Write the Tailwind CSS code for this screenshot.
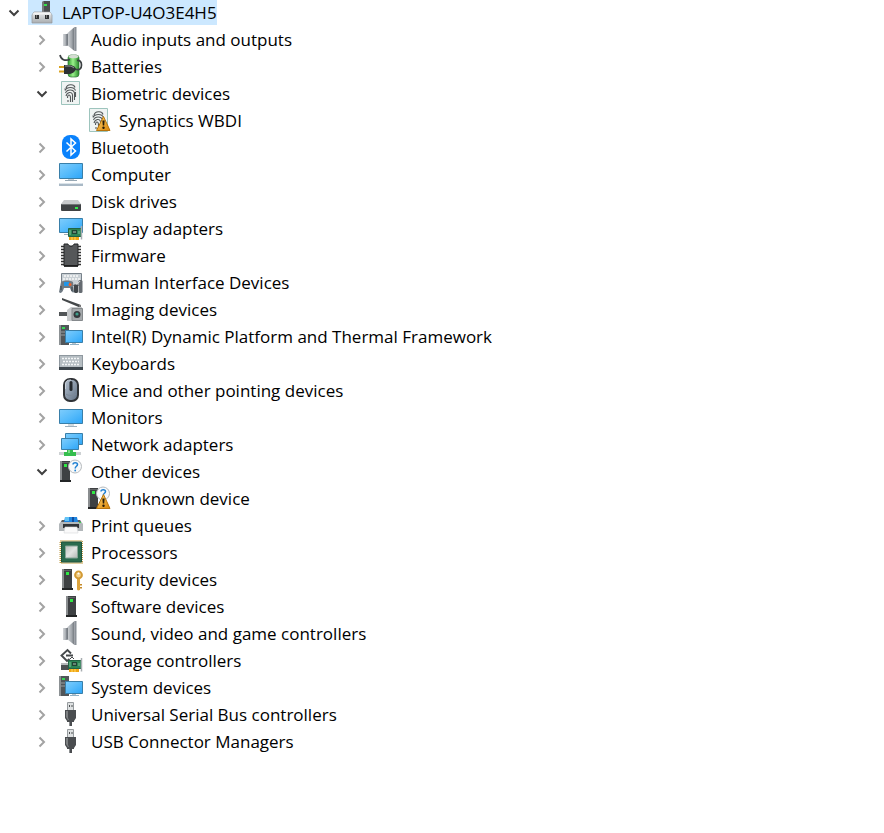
<!DOCTYPE html>
<html lang="en">
<head>
    <meta charset="UTF-8">
    <meta name="viewport" content="width=device-width, initial-scale=1.0">
    <script src="https://cdn.jsdelivr.net/npm/@tailwindcss/browser@4"></script>
    <title>Device Manager</title>
</head>
<body class="bg-white text-black font-['Open_Sans','Noto_Sans',sans-serif] text-[17px] leading-[26px]">

  <!-- icons -->
  <svg class="absolute size-0" aria-hidden="true">
    <defs>
      <linearGradient id="screen" x1="0" y1="0" x2="1" y2="1"><stop offset="0" stop-color="#7fcdfc"/><stop offset=".5" stop-color="#56bbfb"/><stop offset="1" stop-color="#2da5f8"/></linearGradient>
      <linearGradient id="steel" x1="0" y1="0" x2="1" y2="0"><stop offset="0" stop-color="#d3d6d9"/><stop offset=".6" stop-color="#a4a9ae"/><stop offset="1" stop-color="#6c7278"/></linearGradient>
      <linearGradient id="silver" x1="0" y1="0" x2="0" y2="1"><stop offset="0" stop-color="#e9ebec"/><stop offset="1" stop-color="#a9adb0"/></linearGradient>
      <linearGradient id="battery" x1="0" y1="0" x2="1" y2="0"><stop offset="0" stop-color="#2f9e2e"/><stop offset=".45" stop-color="#9bf08c"/><stop offset="1" stop-color="#248a27"/></linearGradient>
      <linearGradient id="gold" x1="0" y1="0" x2="1" y2="1"><stop offset="0" stop-color="#ffd36a"/><stop offset="1" stop-color="#d98509"/></linearGradient>
      <linearGradient id="mouse" x1="0" y1="0" x2="1" y2="1"><stop offset="0" stop-color="#b8c4d2"/><stop offset="1" stop-color="#5f6f82"/></linearGradient>
      <linearGradient id="metal" x1="0" y1="0" x2="1" y2="1"><stop offset="0" stop-color="#bcc0bd"/><stop offset=".5" stop-color="#e2e4e2"/><stop offset="1" stop-color="#b3b7b4"/></linearGradient>
    </defs>

    <symbol id="right" viewBox="0 0 12 12"><path d="M3.500 1.500 8 6l-4.500 4.500" fill="none" stroke="#a3a3a3" stroke-width="2"/></symbol>
    <symbol id="down" viewBox="0 0 12 12"><path d="M1.500 3.500 6 8l4.500-4.500" fill="none" stroke="#404040" stroke-width="2"/></symbol>

    <symbol id="laptop" viewBox="0 0 24 24">
      <path d="M12 2l2-1h6v13h-8z" fill="#4b4e50"/><path d="M12 2l2-1v12h-2z" fill="#77797b"/><path d="M14 4h3v2h-3z" fill="#35e04c"/>
      <path d="M4 12h16l2 3v8H2v-8z" fill="url(#silver)" stroke="#92979a" stroke-width=".7"/><path d="M4 12.500h16l1.500 2h-19z" fill="#f3f4f4"/>
      <path d="M5 15h4v4H5zM15 15h4v4h-4z" fill="#303234"/><path d="M6 15h1v3H6zM16 15h1v3h-1z" fill="#777"/>
    </symbol>
    <symbol id="speaker" viewBox="0 0 24 24">
      <path d="M4 7h5v12H4z" fill="url(#steel)"/><path d="M8 6.500 15.500 0v24L8 18z" fill="url(#steel)"/>
      <path d="M7.500 7h1.500v11H7.500z" fill="#777d83"/><path d="M15.500 0H18v24h-2.500z" fill="#8b9198"/><path d="M17 0h1v24h-1z" fill="#c3c7ca"/>
    </symbol>
    <symbol id="batteries" viewBox="0 0 24 24">
      <rect x="9" y="1" width="11" height="22" rx="3" fill="url(#battery)" stroke="#32753a" stroke-width=".7"/>
      <ellipse cx="14.500" cy="2.500" rx="5" ry="1.800" fill="#d5dcd2"/>
      <path d="M1 1c1 5 5 6 10 4.500M16 15c5 2 6.500-1 6.500-4S21 6 18 6.500" fill="none" stroke="#3b4042" stroke-width="1.700"/>
      <path d="M0 13h6M0 17.500h6" stroke="#d9a320" stroke-width="2"/>
      <path d="M5 11h5c4 0 6 2 7 4-1 3-4 5-8 5H5z" fill="#2e3234"/><path d="M6 12h4c2 0 4 1 5 2" stroke="#8f9698" fill="none"/>
    </symbol>
    <symbol id="print" viewBox="0 0 24 24">
      <path d="M2.500.500h18v23h-18z" fill="#f0f4f3" stroke="#9dc4bd"/>
      <g fill="none" stroke="#54585a" stroke-width="1.100">
        <path d="M7 7c1-4 8-4.500 9-.500M6 9.500c2-4 9-4 10.500 0M6.500 12C8 8 14.500 8 15.500 12v7M7 15c1-4 6-5 6.500-1v7M8.500 17c0-4 3-4 3 0v4M9 19v2M6 7.500v1M16.500 11v5"/>
      </g>
    </symbol>
    <symbol id="warning" viewBox="0 0 24 24">
      <path d="M16.500 8.500 23 22.500H9.500z" fill="url(#gold)" stroke="#b8750e" stroke-linejoin="round"/>
      <path d="M15.400 12.500h2.200l-.4 5h-1.400z" fill="#241a08"/><circle cx="16.500" cy="19.800" r="1.200" fill="#241a08"/>
    </symbol>
    <symbol id="bluetooth" viewBox="0 0 24 24">
      <rect x="3" width="18" height="24" rx="8" fill="#0a82fc"/>
      <path d="m7.500 7.500 9 8.500-4.500 4V4l4.500 4-9 8.500" fill="none" stroke="#fff" stroke-width="1.500"/>
    </symbol>
    <symbol id="computer" viewBox="0 0 24 24">
      <path d="M.5 1.500h23v15H.500z" fill="url(#screen)" stroke="#397fa9"/><path d="M9 17h6v2H9z" fill="#c1cbd2"/><path d="M6 18h12v1H6z" fill="#98a9b5"/>
      <path d="M1 21h22l1 1v2H0v-2z" fill="#a9b9c6"/><path d="M1 21h22v1H1z" fill="#dbe4ea"/>
    </symbol>
    <symbol id="disk" viewBox="0 0 24 24">
      <path d="M5 11h14l3 4v2H2v-2z" fill="#c8cacc"/><rect x="2" y="15" width="20" height="7" rx="1" fill="#3f4244"/><path d="M3 15h18v1H3z" fill="#707375"/><path d="M16 18h3v2h-3z" fill="#36e74b"/>
    </symbol>
    <symbol id="card" viewBox="0 0 24 24">
      <path d="M10 19h10v5H10z" fill="#f0a615"/><path d="M13 20v4M16 20v4" stroke="#ffda64"/>
      <path d="M9.500 12.500h13v8h-13z" fill="#2c8555" stroke="#216444"/><path d="M13 14h5v4h-5z" fill="#1e4534"/><path d="M14 15h3v2h-3z" fill="#668674"/><path d="M11 14v5M20 15v3" stroke="#7ec19b"/>
      <path d="M22.500 10v13.500" stroke="#a8aeb1" stroke-width="1.500"/>
    </symbol>
    <symbol id="display" viewBox="0 0 24 24">
      <path d="M.5 2.500h23v14H.500z" fill="url(#screen)" stroke="#397fa9"/><path d="M5 18h6v1H5z" fill="#a0aeb7"/>
      <use href="#card"/>
    </symbol>
    <symbol id="firmware" viewBox="0 0 24 24">
      <path d="M2 3.500h20M2 6.500h20M2 9.500h20M2 12.500h20M2 15.500h20M2 18.500h20M2 21.500h20" stroke="#333" stroke-width="1.600"/>
      <path d="M5 1h4c.5 3 5.500 3 6 0h4v22H5z" fill="#555759" stroke="#242628"/><path d="M5 23h14" stroke="#151515" stroke-width="1.500"/>
    </symbol>
    <symbol id="hid" viewBox="0 0 24 24">
      <path d="M2.500 3.500h20v12h-20z" fill="#c9d0d5" stroke="#78828b"/><path d="M5 6h15M4 9h17" stroke="#f8f8f8" stroke-width="1.500" stroke-dasharray="2 1"/>
      <path d="M2 12c3-2 9-2 12 0l1 10c-2 2-3-2-4-4H5c-1 3-3 7-5 4z" fill="#6f7a83"/><path d="M5 12h5v4H5z" fill="#2196e9"/><circle cx="11" cy="14.500" r="1.500" fill="#e9632c"/><path d="M2 16v4M13 17v4" stroke="#555f67" stroke-width="2"/>
      <rect x="15" y="14" width="4" height="9" rx="1.500" fill="#404549"/><rect x="19.500" y="10" width="4" height="13" rx="1.500" fill="#656b71"/><path d="M17 15c0-3 3-1 4-4" stroke="#ddd" fill="none"/>
    </symbol>
    <symbol id="camera" viewBox="0 0 24 24">
      <path d="m3 1 19 7v3L3 3z" fill="#44484a"/><path d="M20 8h2v6h-2z" fill="#777"/>
      <path d="M0 15h10v4H0z" fill="#515557"/><path d="M8 13l4-3h11v14H8z" fill="#c6c9cb"/><path d="M13 11.500h10.500v12H13z" fill="#a4a8ab" stroke="#85898c"/>
      <circle cx="18" cy="17.500" r="3.500" fill="#34383b"/><circle cx="18" cy="17" r="1.600" fill="#3f9e8b"/>
    </symbol>
    <symbol id="system" viewBox="0 0 24 24">
      <path d="M0 1h10v20H0z" fill="#515659"/><path d="M0 1h2v20H0z" fill="#8c9194"/><path d="M3 3h3v2H3z" fill="#38d756"/><path d="M2 8h5M2 11h5" stroke="#989da0"/>
      <path d="M6.500 6.500h17v12h-17z" fill="url(#screen)" stroke="#397fa9"/><path d="M13 19h4v1h-4z" fill="#b9c4cb"/><path d="M11 20h9v1h-9z" fill="#91b1c5"/>
    </symbol>
    <symbol id="keyboard" viewBox="0 0 24 24">
      <path d="M0 4h24v15H0z" fill="#8f989f"/><path d="M1 5h22v11H1z" fill="#b6bec3"/>
      <path d="M3 7.500h18M4 10.500h16M3 13.500h18" stroke="#f4f6f7" stroke-width="1.600" stroke-dasharray="2 1"/><path d="M0 16h24v3H0z" fill="#3d464d"/>
    </symbol>
    <symbol id="mice" viewBox="0 0 24 24">
      <rect x="5" y="1" width="14" height="22" rx="6" fill="url(#mouse)" stroke="#303337" stroke-width="2"/>
      <path d="M6.500 11V6c0-3 2-4 5.500-4" fill="none" stroke="#cbd3dc"/><rect x="10.500" y="3" width="3" height="10" rx="1.500" fill="#25292d"/><path d="M7 16c2 2 8 2 10 0" fill="none" stroke="#7d8a99"/>
    </symbol>
    <symbol id="monitor" viewBox="0 0 24 24">
      <path d="M.5 4.500h23v14H.500z" fill="url(#screen)" stroke="#397fa9"/><path d="M9 19h6v2H9z" fill="#d2dade"/><path d="M6 21h12v1H6z" fill="#9eb0bd"/>
    </symbol>
    <symbol id="network" viewBox="0 0 24 24">
      <path d="M6.500 1.500h17v11h-17z" fill="url(#screen)" stroke="#397fa9"/><path d="M2.500 6.500h17v11h-17z" fill="url(#screen)" stroke="#397fa9"/>
      <path d="M0 20h22v3H0z" fill="#cdd1d3"/><path d="M8 18h6v2h3v4H5v-4h3z" fill="#35be4e"/><path d="M9 18h2v3H9z" fill="#78dd82"/>
    </symbol>
    <symbol id="tower" viewBox="0 0 24 24">
      <path d="M8 2h9v20H8z" fill="#3e4143"/><path d="M7 2h2v20H7z" fill="#8a8d8f"/><path d="M11 5h3v3h-3z" fill="#2fe944"/><path d="M7 21h11v2H7z" fill="#232526"/><path d="M9 3h7v1H9z" fill="#606365"/>
    </symbol>
    <symbol id="unknown" viewBox="0 0 24 24">
      <use href="#tower" x="-6"/>
      <circle cx="16" cy="7.500" r="6.500" fill="#f7f9fa" stroke="#b6babd"/>
      <path d="M14 5.500c0-2.500 4.500-2.500 4.500 0 0 1.800-2.300 1.800-2.300 4" fill="none" stroke="#2182d3" stroke-width="1.500"/><circle cx="16.200" cy="11.500" r=".9" fill="#2182d3"/>
    </symbol>
    <symbol id="printer" viewBox="0 0 24 24">
      <path d="M3 7h18l3 4v7H0v-7z" fill="#b2b7ba"/><path d="M3 7h18l1 2H2z" fill="#5a6064"/><path d="M6 4h12l1 5H5z" fill="#2186df"/><path d="M6 4h4v4H6z" fill="#62c3f5"/><path d="M13 4h2v5h-2z" fill="#114fa0"/>
      <path d="M4 11h16v4H4z" fill="#303437"/><path d="M6 14h12l1 6H5z" fill="#fafafa" stroke="#d7d9da" stroke-width=".6"/><path d="M20 9h2v1h-2z" fill="#39de4c"/>
    </symbol>
    <symbol id="processor" viewBox="0 0 24 24">
      <rect x="1.500" y="1" width="22" height="22" fill="none" stroke="#c19b45" stroke-width="2" stroke-dasharray="1 1"/>
      <path d="M2.500 2h20v20h-20z" fill="#2a6b4e" stroke="#1f553d"/><path d="M6.500 6h12v12h-12z" fill="url(#metal)" stroke="#86a597"/>
    </symbol>
    <symbol id="security" viewBox="0 0 24 24">
      <use href="#tower" x="-4"/>
      <circle cx="19.500" cy="8" r="3.400" fill="#f5d18a" stroke="#d29a35" stroke-width="2"/><circle cx="19.500" cy="6.500" r="1" fill="#fff"/><path d="M18 12h3v11l-2 .5-1-1z" fill="#dca33d"/><path d="M21 17h2v1.500h-2zM21 20h2v1.500h-2z" fill="#c58a27"/>
    </symbol>
    <symbol id="storage" viewBox="0 0 24 24">
      <path d="M2 15h9l1 7H2z" fill="#4c5052"/><path d="M2 15h9v2H2z" fill="#b6b9bb"/>
      <path d="M12 5.500 8.500 2 2.500 7.500 8 13l2.500-2M7 7.500h7" fill="none" stroke="#45494b" stroke-width="1.900"/><path d="m11 11 2-2 2 2" stroke="#45494b" fill="none"/>
      <use href="#card"/>
    </symbol>
    <symbol id="usb" viewBox="0 0 24 24">
      <path d="M8.500.500h6v8h-6z" fill="#dde0e1" stroke="#969b9e"/><path d="M10 3h1v2h-1zM12.500 3h1v2h-1z" fill="#4a4d4f"/>
      <path d="M6 8h11v8l-2 3v1h-2v4h-3v-4H8v-1l-2-3z" fill="#4a4d50"/><path d="M7 9h2v7l1 2H9l-2-3z" fill="#7d8082"/><path d="M10 20h1v4h-1z" fill="#8b8e90"/>
    </symbol>
  </svg>

  <main class="overflow-hidden pb-20">
    <ul>
      <li>
        <div class="flex h-[27px] items-start whitespace-nowrap">
          <button class="flex h-[26px] w-7 items-center justify-center" aria-label="Collapse LAPTOP-U4O3E4H5"><svg class="size-3"><use href="#down"/></svg></button>
          <span class="flex h-[25px] gap-2 bg-[#cce8ff] pl-0.5"><svg class="size-6"><use href="#laptop"/></svg>LAPTOP-U4O3E4H5</span>
        </div>

        <ul class="pl-7">
          <li class="flex h-[27px] items-start whitespace-nowrap">
            <button class="flex h-[26px] w-7 items-center justify-center" aria-label="Expand Audio inputs and outputs"><svg class="size-3"><use href="#right"/></svg></button>
            <span class="flex gap-2 pl-[3px]"><svg class="size-6"><use href="#speaker"/></svg>Audio inputs and outputs</span>
          </li>
          <li class="flex h-[27px] items-start whitespace-nowrap">
            <button class="flex h-[26px] w-7 items-center justify-center" aria-label="Expand Batteries"><svg class="size-3"><use href="#right"/></svg></button>
            <span class="flex gap-2 pl-[3px]"><svg class="size-6"><use href="#batteries"/></svg>Batteries</span>
          </li>
          <li>
            <div class="flex h-[27px] items-start whitespace-nowrap">
              <button class="flex h-[26px] w-7 items-center justify-center" aria-label="Collapse Biometric devices"><svg class="size-3"><use href="#down"/></svg></button>
              <span class="flex gap-2 pl-[3px]"><svg class="size-6"><use href="#print"/></svg>Biometric devices</span>
            </div>
            <ul class="pl-14">
              <li class="flex h-[27px] items-start gap-2 pl-[3px] whitespace-nowrap"><svg class="size-6"><use href="#print"/><use href="#warning"/></svg>Synaptics WBDI</li>
            </ul>
          </li>
          <li class="flex h-[27px] items-start whitespace-nowrap">
            <button class="flex h-[26px] w-7 items-center justify-center" aria-label="Expand Bluetooth"><svg class="size-3"><use href="#right"/></svg></button>
            <span class="flex gap-2 pl-[3px]"><svg class="size-6"><use href="#bluetooth"/></svg>Bluetooth</span>
          </li>
          <li class="flex h-[27px] items-start whitespace-nowrap">
            <button class="flex h-[26px] w-7 items-center justify-center" aria-label="Expand Computer"><svg class="size-3"><use href="#right"/></svg></button>
            <span class="flex gap-2 pl-[3px]"><svg class="size-6"><use href="#computer"/></svg>Computer</span>
          </li>
          <li class="flex h-[27px] items-start whitespace-nowrap">
            <button class="flex h-[26px] w-7 items-center justify-center" aria-label="Expand Disk drives"><svg class="size-3"><use href="#right"/></svg></button>
            <span class="flex gap-2 pl-[3px]"><svg class="size-6"><use href="#disk"/></svg>Disk drives</span>
          </li>
          <li class="flex h-[27px] items-start whitespace-nowrap">
            <button class="flex h-[26px] w-7 items-center justify-center" aria-label="Expand Display adapters"><svg class="size-3"><use href="#right"/></svg></button>
            <span class="flex gap-2 pl-[3px]"><svg class="size-6"><use href="#display"/></svg>Display adapters</span>
          </li>
          <li class="flex h-[27px] items-start whitespace-nowrap">
            <button class="flex h-[26px] w-7 items-center justify-center" aria-label="Expand Firmware"><svg class="size-3"><use href="#right"/></svg></button>
            <span class="flex gap-2 pl-[3px]"><svg class="size-6"><use href="#firmware"/></svg>Firmware</span>
          </li>
          <li class="flex h-[27px] items-start whitespace-nowrap">
            <button class="flex h-[26px] w-7 items-center justify-center" aria-label="Expand Human Interface Devices"><svg class="size-3"><use href="#right"/></svg></button>
            <span class="flex gap-2 pl-[3px]"><svg class="size-6"><use href="#hid"/></svg>Human Interface Devices</span>
          </li>
          <li class="flex h-[27px] items-start whitespace-nowrap">
            <button class="flex h-[26px] w-7 items-center justify-center" aria-label="Expand Imaging devices"><svg class="size-3"><use href="#right"/></svg></button>
            <span class="flex gap-2 pl-[3px]"><svg class="size-6"><use href="#camera"/></svg>Imaging devices</span>
          </li>
          <li class="flex h-[27px] items-start whitespace-nowrap">
            <button class="flex h-[26px] w-7 items-center justify-center" aria-label="Expand Intel(R) Dynamic Platform and Thermal Framework"><svg class="size-3"><use href="#right"/></svg></button>
            <span class="flex gap-2 pl-[3px]"><svg class="size-6"><use href="#system"/></svg>Intel(R) Dynamic Platform and Thermal Framework</span>
          </li>
          <li class="flex h-[27px] items-start whitespace-nowrap">
            <button class="flex h-[26px] w-7 items-center justify-center" aria-label="Expand Keyboards"><svg class="size-3"><use href="#right"/></svg></button>
            <span class="flex gap-2 pl-[3px]"><svg class="size-6"><use href="#keyboard"/></svg>Keyboards</span>
          </li>
          <li class="flex h-[27px] items-start whitespace-nowrap">
            <button class="flex h-[26px] w-7 items-center justify-center" aria-label="Expand Mice and other pointing devices"><svg class="size-3"><use href="#right"/></svg></button>
            <span class="flex gap-2 pl-[3px]"><svg class="size-6"><use href="#mice"/></svg>Mice and other pointing devices</span>
          </li>
          <li class="flex h-[27px] items-start whitespace-nowrap">
            <button class="flex h-[26px] w-7 items-center justify-center" aria-label="Expand Monitors"><svg class="size-3"><use href="#right"/></svg></button>
            <span class="flex gap-2 pl-[3px]"><svg class="size-6"><use href="#monitor"/></svg>Monitors</span>
          </li>
          <li class="flex h-[27px] items-start whitespace-nowrap">
            <button class="flex h-[26px] w-7 items-center justify-center" aria-label="Expand Network adapters"><svg class="size-3"><use href="#right"/></svg></button>
            <span class="flex gap-2 pl-[3px]"><svg class="size-6"><use href="#network"/></svg>Network adapters</span>
          </li>
          <li>
            <div class="flex h-[27px] items-start whitespace-nowrap">
              <button class="flex h-[26px] w-7 items-center justify-center" aria-label="Collapse Other devices"><svg class="size-3"><use href="#down"/></svg></button>
              <span class="flex gap-2 pl-[3px]"><svg class="size-6"><use href="#unknown"/></svg>Other devices</span>
            </div>
            <ul class="pl-14">
              <li class="flex h-[27px] items-start gap-2 pl-[3px] whitespace-nowrap"><svg class="size-6"><use href="#unknown"/><use href="#warning"/></svg>Unknown device</li>
            </ul>
          </li>
          <li class="flex h-[27px] items-start whitespace-nowrap">
            <button class="flex h-[26px] w-7 items-center justify-center" aria-label="Expand Print queues"><svg class="size-3"><use href="#right"/></svg></button>
            <span class="flex gap-2 pl-[3px]"><svg class="size-6"><use href="#printer"/></svg>Print queues</span>
          </li>
          <li class="flex h-[27px] items-start whitespace-nowrap">
            <button class="flex h-[26px] w-7 items-center justify-center" aria-label="Expand Processors"><svg class="size-3"><use href="#right"/></svg></button>
            <span class="flex gap-2 pl-[3px]"><svg class="size-6"><use href="#processor"/></svg>Processors</span>
          </li>
          <li class="flex h-[27px] items-start whitespace-nowrap">
            <button class="flex h-[26px] w-7 items-center justify-center" aria-label="Expand Security devices"><svg class="size-3"><use href="#right"/></svg></button>
            <span class="flex gap-2 pl-[3px]"><svg class="size-6"><use href="#security"/></svg>Security devices</span>
          </li>
          <li class="flex h-[27px] items-start whitespace-nowrap">
            <button class="flex h-[26px] w-7 items-center justify-center" aria-label="Expand Software devices"><svg class="size-3"><use href="#right"/></svg></button>
            <span class="flex gap-2 pl-[3px]"><svg class="size-6"><use href="#tower"/></svg>Software devices</span>
          </li>
          <li class="flex h-[27px] items-start whitespace-nowrap">
            <button class="flex h-[26px] w-7 items-center justify-center" aria-label="Expand Sound, video and game controllers"><svg class="size-3"><use href="#right"/></svg></button>
            <span class="flex gap-2 pl-[3px]"><svg class="size-6"><use href="#speaker"/></svg>Sound, video and game controllers</span>
          </li>
          <li class="flex h-[27px] items-start whitespace-nowrap">
            <button class="flex h-[26px] w-7 items-center justify-center" aria-label="Expand Storage controllers"><svg class="size-3"><use href="#right"/></svg></button>
            <span class="flex gap-2 pl-[3px]"><svg class="size-6"><use href="#storage"/></svg>Storage controllers</span>
          </li>
          <li class="flex h-[27px] items-start whitespace-nowrap">
            <button class="flex h-[26px] w-7 items-center justify-center" aria-label="Expand System devices"><svg class="size-3"><use href="#right"/></svg></button>
            <span class="flex gap-2 pl-[3px]"><svg class="size-6"><use href="#system"/></svg>System devices</span>
          </li>
          <li class="flex h-[27px] items-start whitespace-nowrap">
            <button class="flex h-[26px] w-7 items-center justify-center" aria-label="Expand Universal Serial Bus controllers"><svg class="size-3"><use href="#right"/></svg></button>
            <span class="flex gap-2 pl-[3px]"><svg class="size-6"><use href="#usb"/></svg>Universal Serial Bus controllers</span>
          </li>
          <li class="flex h-[27px] items-start whitespace-nowrap">
            <button class="flex h-[26px] w-7 items-center justify-center" aria-label="Expand USB Connector Managers"><svg class="size-3"><use href="#right"/></svg></button>
            <span class="flex gap-2 pl-[3px]"><svg class="size-6"><use href="#usb"/></svg>USB Connector Managers</span>
          </li>
        </ul>
      </li>
    </ul>
  </main>

</body>
</html>
